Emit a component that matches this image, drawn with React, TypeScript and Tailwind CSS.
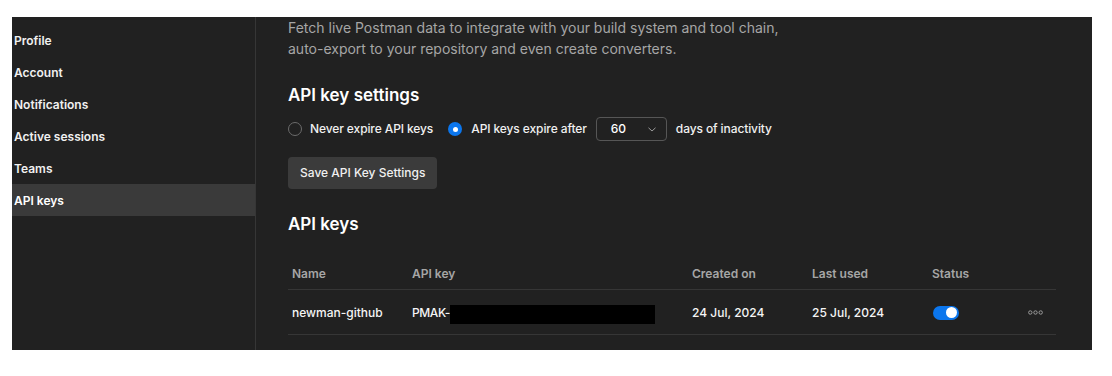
import React from "react";

const navItems = ["Profile", "Account", "Notifications", "Active sessions", "Teams", "API keys"];

function Radio({ checked }: { checked: boolean }) {
  return checked ? (
    <span className="flex h-[14px] w-[14px] items-center justify-center rounded-full bg-[#0b76ed]">
      <span className="h-[5px] w-[5px] rounded-full bg-white" />
    </span>
  ) : (
    <span className="h-[14px] w-[14px] rounded-full border border-[#6b6b6b]" />
  );
}

export default function App() {
  return (
    <div
      className="h-[376px] w-[1112px] bg-white pl-[12px] pt-[17px]"
      style={{ fontFamily: "Inter, 'Noto Sans', sans-serif" }}
    >
      <div className="flex h-[333px] w-[1080px] overflow-hidden bg-[#212121] text-white">
        {/* Sidebar */}
        <aside className="w-[244px] shrink-0 border-r border-[#363636] pt-[7px]">
          {navItems.map((item) => (
            <div
              key={item}
              className={`flex h-[32px] items-center pl-[2px] pt-[2px] text-[12px] font-semibold ${
                item === "API keys" ? "bg-[#3a3a3a] text-white" : "text-[#f0f0f0]"
              }`}
            >
              {item}
            </div>
          ))}
        </aside>

        {/* Main */}
        <main className="flex-1 pl-[32px] pr-[36px]">
          <p className="text-[14px] leading-[21px] text-[#a6a6a6]">
            Fetch live Postman data to integrate with your build system and tool chain,
            <br />
            auto-export to your repository and even create converters.
          </p>

          <h2 className="mt-[24px] text-[17px] font-semibold leading-[24px] text-white">API key settings</h2>

          <div className="mt-[10px] flex h-[24px] items-center text-[12px] font-medium tracking-[-0.1px] text-[#f0f0f0]">
            <Radio checked={false} />
            <span className="ml-[8px]">Never expire API keys</span>
            <span className="ml-[15px]">
              <Radio checked={true} />
            </span>
            <span className="ml-[9px]">API keys expire after</span>
            <div className="ml-[9px] flex h-[24px] w-[71px] items-center justify-between rounded-[4px] border border-[#565656] pl-[14px] pr-[10px]">
              <span className="text-[12px] text-white">60</span>
              <svg width="8" height="5" viewBox="0 0 8 5" fill="none">
                <path d="M0.5 0.8 L4 4 L7.5 0.8" stroke="#9a9a9a" strokeWidth="1" />
              </svg>
            </div>
            <span className="ml-[9px]">days of inactivity</span>
          </div>

          <button className="mt-[16px] flex h-[32px] items-center rounded-[4px] bg-[#3b3b3b] px-[12px] text-[12px] font-medium text-[#f0f0f0]">
            Save API Key Settings
          </button>

          <h2 className="mt-[23px] text-[17px] font-semibold leading-[24px] text-white">API keys</h2>

          <div className="mt-[21px] w-[768px]">
            <div className="grid h-[33px] grid-cols-[120px_280px_120px_120px_1fr_auto] items-center border-b border-[#363636] pl-[4px] pr-[13px] pt-[2px] text-[12px] font-semibold text-[#a6a6a6]">
              <span>Name</span>
              <span>API key</span>
              <span>Created on</span>
              <span>Last used</span>
              <span>Status</span>
              <span />
            </div>
            <div className="grid h-[45px] grid-cols-[120px_280px_120px_120px_1fr_auto] items-center border-b border-[#363636] pl-[4px] pr-[13px] pt-[1px] text-[12px] font-medium text-[#f5f5f5]">
              <span>newman-github</span>
              <span className="flex items-center">
                <span className="whitespace-nowrap tracking-[-0.4px]">PMAK-</span>
                <span className="relative top-[2px] h-[19px] w-[205px] bg-black" />
              </span>
              <span>24 Jul, 2024</span>
              <span>25 Jul, 2024</span>
              <span className="flex items-center pl-[1px]">
                <span className="flex h-[14px] w-[26px] items-center justify-end rounded-full bg-[#0b76ed] pr-[2px]">
                  <span className="h-[11px] w-[11px] rounded-full bg-white" />
                </span>
              </span>
              <svg width="15" height="5" viewBox="0 0 15 5" fill="none">
                <circle cx="2.3" cy="2.5" r="1.7" stroke="#9a9a9a" strokeWidth="1" />
                <circle cx="7.5" cy="2.5" r="1.7" stroke="#9a9a9a" strokeWidth="1" />
                <circle cx="12.7" cy="2.5" r="1.7" stroke="#9a9a9a" strokeWidth="1" />
              </svg>
            </div>
          </div>
        </main>
      </div>
    </div>
  );
}
